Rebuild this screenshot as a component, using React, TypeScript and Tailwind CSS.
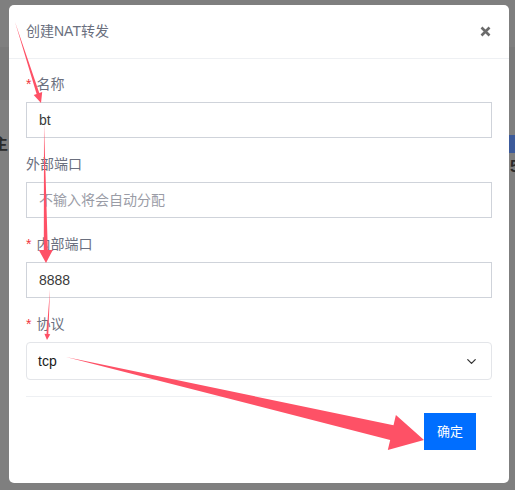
import { ChevronDown } from "lucide-react";

const cjk = "font-['Liberation_Sans','Noto_Sans_CJK_SC',sans-serif]";

type Arrow = {
  from: [number, number];
  to: [number, number];
  head: number;
  headHalf: number;
  shaftHalf: number;
};

// annotation arrows drawn over the screenshot
const arrows: Arrow[] = [
  { from: [15, 22], to: [41, 103], head: 10, headHalf: 4.5, shaftHalf: 1.4 },
  { from: [44, 123], to: [46, 263], head: 13, headHalf: 7, shaftHalf: 2 },
  { from: [50, 289], to: [47, 340], head: 6, headHalf: 3, shaftHalf: 0.9 },
  { from: [66, 357], to: [424, 440], head: 33, headHalf: 18, shaftHalf: 7.5 },
];

function arrowPoints(a: Arrow) {
  const [x1, y1] = a.from;
  const [x2, y2] = a.to;
  const len = Math.hypot(x2 - x1, y2 - y1);
  const ux = (x2 - x1) / len;
  const uy = (y2 - y1) / len;
  const px = -uy;
  const py = ux;
  const bx = x2 - ux * a.head;
  const by = y2 - uy * a.head;
  const pts = [
    [x1, y1],
    [bx + px * a.shaftHalf, by + py * a.shaftHalf],
    [bx + px * a.headHalf, by + py * a.headHalf],
    [x2, y2],
    [bx - px * a.headHalf, by - py * a.headHalf],
    [bx - px * a.shaftHalf, by - py * a.shaftHalf],
  ];
  return pts.map((p) => `${p[0].toFixed(1)},${p[1].toFixed(1)}`).join(" ");
}

function Label({ text, required }: { text: string; required?: boolean }) {
  return (
    <div className="flex h-5 items-center text-[14px] text-[#6a6f7e]">
      {required && <span className="mr-[5px] text-[#f0353d]">*</span>}
      {text}
    </div>
  );
}

function Field({ value, placeholder }: { value?: string; placeholder?: string }) {
  return (
    <div className="mt-2 flex h-9 items-center border border-[#cfd3da] px-3 text-[14px]">
      {value ? (
        <span className="text-[#3a3a3a]">{value}</span>
      ) : (
        <span className="text-[#9a9ca6]">{placeholder}</span>
      )}
    </div>
  );
}

export default function App() {
  return (
    <div className={`relative h-[490px] w-[515px] overflow-hidden bg-[#7f7f7f] ${cjk}`}>
      {/* dimmed page behind the dialog */}
      <div className="flex flex-col">
        <div className="h-[47px]" />
        <div className="h-[53px] bg-[#7a7a7a]" />
        <div className="h-[35px]" />
        <div className="flex h-[18px] items-center justify-between">
          <span className="-ml-[7px] text-[15px] font-bold text-[#2a2a2a]">主</span>
          <span className="h-[18px] w-[8px] bg-[#3c5a9a]" />
        </div>
        <div className="flex h-[28px] items-center justify-end">
          <span className="-mr-[4px] text-[16px] font-bold text-[#2a2a2a]">5</span>
        </div>
      </div>

      {/* dialog */}
      <div className="absolute left-[9px] top-[5px] w-[500px] rounded-[5px] bg-white">
        <div className="flex h-[53px] items-center justify-between pl-[17px] pr-[18px]">
          <span className="text-[14px] text-[#6a6f7e]">创建NAT转发</span>
          <svg width="11" height="11" viewBox="0 0 11 11">
            <path d="M1.5 1.5 L9.5 9.5 M9.5 1.5 L1.5 9.5" stroke="#6b6b6b" strokeWidth="2.6" />
          </svg>
        </div>
        <div className="h-px bg-[#eef0f3]" />

        <div className="px-[17px] pb-[33px] pt-[15px]">
          <Label text="名称" required />
          <Field value="bt" />

          <div className="mt-4">
            <Label text="外部端口" />
            <Field placeholder="不输入将会自动分配" />
          </div>

          <div className="mt-4">
            <Label text="内部端口" required />
            <Field value="8888" />
          </div>

          <div className="mt-4">
            <Label text="协议" required />
            <div className="mt-2 flex h-[38px] items-center justify-between rounded-[4px] border border-[#e3e5e9] pl-[11px] pr-[12px] text-[14px] text-[#1a1a1a]">
              <span>tcp</span>
              <ChevronDown size={15} strokeWidth={2} className="text-[#333]" />
            </div>
          </div>

          <div className="mt-4 h-px bg-[#eef0f3]" />

          <div className="mt-4 flex justify-end pr-[16px]">
            <button className="h-[37px] w-[52px] bg-[#006eff] text-[13px] text-white">确定</button>
          </div>
        </div>
      </div>

      <svg className="pointer-events-none absolute inset-0" width="515" height="490">
        {arrows.map((a, i) => (
          <polygon key={i} points={arrowPoints(a)} fill="#fe5166" />
        ))}
      </svg>
    </div>
  );
}
